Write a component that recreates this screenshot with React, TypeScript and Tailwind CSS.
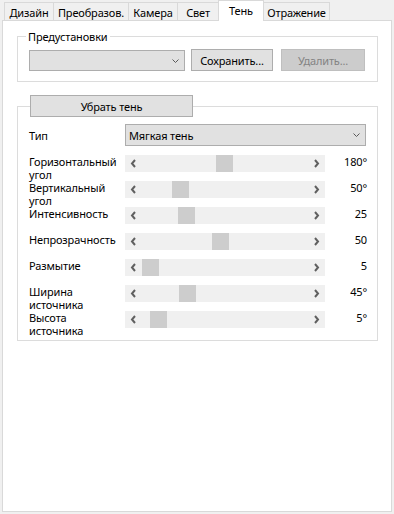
import React from "react";

const tabs = [
    { label: "Дизайн", w: "w-[50px]" },
    { label: "Преобразов.", w: "w-[76px]" },
    { label: "Камера", w: "w-[50px]" },
    { label: "Свет", w: "w-[42px]" },
    { label: "Тень", w: "w-[46px]", active: true },
    { label: "Отражение", w: "w-[67px]" },
];

const sliders = [
    { label: ["Горизонтальный", "угол"], pos: 74, value: "180°" },
    { label: ["Вертикальный", "угол"], pos: 30, value: "50°" },
    { label: ["Интенсивность"], pos: 36, value: "25" },
    { label: ["Непрозрачность"], pos: 70, value: "50" },
    { label: ["Размытие"], pos: 0, value: "5" },
    { label: ["Ширина", "источника"], pos: 37, value: "45°" },
    { label: ["Высота", "источника"], pos: 8, value: "5°" },
];

function ComboArrow() {
    return (
        <svg width="7" height="4" viewBox="0 0 7 4" className="shrink-0">
            <polyline points="0.5,0.5 3.5,3.5 6.5,0.5" fill="none" stroke="#5a5a5a" strokeWidth="1" />
        </svg>
    );
}

function ScrollArrow({ dir }: { dir: "left" | "right" }) {
    return (
        <div className="w-[17px] h-[17px] shrink-0">
            <svg width="17" height="17" viewBox="0 0 17 17">
                {dir === "left" ? (
                    <polyline points="10,5 7,8.5 10,12" fill="none" stroke="#606060" strokeWidth="2" />
                ) : (
                    <polyline points="7,5 10,8.5 7,12" fill="none" stroke="#606060" strokeWidth="2" />
                )}
            </svg>
        </div>
    );
}

function ScrollBar({ pos }: { pos: number }) {
    return (
        <div className="w-[200px] h-[17px] bg-[#f0f0f0] flex shrink-0">
            <ScrollArrow dir="left" />
            <div className="flex-1 flex">
                <div className="w-[17px] h-[17px] bg-[#cdcdcd]" style={{ marginLeft: pos }} />
            </div>
            <ScrollArrow dir="right" />
        </div>
    );
}

export default function App() {
    return (
        <div
            className="w-[394px] h-[514px] bg-[#f0f0f0] text-[11px] tracking-[-0.15px] text-black overflow-hidden"
            style={{ fontFamily: '"Noto Sans", "Open Sans", sans-serif' }}
        >
            {/* Tabs */}
            <div className="flex items-end h-[20px] pl-[4px]">
                {tabs.map((t, i) =>
                    t.active ? (
                        <div
                            key={t.label}
                            className={`${t.w} ${i > 0 ? "-ml-px" : ""} h-[21px] -mb-px relative z-10 bg-white border border-b-0 border-[#d9d9d9] pt-[2px] leading-[15px] text-center`}
                        >
                            {t.label}
                        </div>
                    ) : (
                        <div
                            key={t.label}
                            className={`${t.w} ${i > 0 ? "-ml-px" : ""} h-[18px] bg-[#f0f0f0] border border-b-0 border-[#d9d9d9] pt-[2px] leading-[15px] text-center whitespace-nowrap`}
                        >
                            {t.label}
                        </div>
                    )
                )}
            </div>

            {/* Tab panel */}
            <div className="ml-[2px] w-[390px] h-[492px] bg-white border border-[#d9d9d9]">
                {/* Presets */}
                <fieldset className="ml-[14px] mt-[8px] w-[361px] border border-[#dcdcdc]">
                    <legend className="ml-[8px] px-[2px] leading-[15px]">Предустановки</legend>
                    <div className="flex items-end h-[27px] pl-[11px]">
                        <div className="w-[156px] h-[21px] bg-[#e1e1e1] border border-[#adadad] flex items-center justify-end pr-[5px]">
                            <ComboArrow />
                        </div>
                        <button className="ml-[6px] w-[82px] h-[22px] bg-[#e1e1e1] border border-[#adadad] leading-[15px]">
                            Сохранить...
                        </button>
                        <button
                            disabled
                            className="ml-[8px] w-[84px] h-[22px] bg-[#cccccc] border border-[#bfbfbf] text-[#838383] leading-[15px]"
                        >
                            Удалить...
                        </button>
                    </div>
                    <div className="h-[10px]" />
                </fieldset>

                {/* Shadow settings */}
                <fieldset className="ml-[14px] mt-[13px] w-[361px] border border-[#dcdcdc]">
                    <legend className="ml-[12px]">
                        <button className="w-[163px] h-[22px] bg-[#e1e1e1] border border-[#adadad] leading-[15px] block">
                            Убрать тень
                        </button>
                    </legend>
                    <div className="pt-[7px] pl-[11px] pb-[12px] flex flex-col gap-[9px]">
                        <div className="flex items-center h-[22px]">
                            <div className="w-[96px] leading-[13px]">Тип</div>
                            <div className="w-[241px] h-[22px] bg-[#e1e1e1] border border-[#adadad] flex items-center justify-between pl-[3px] pr-[5px] leading-[15px]">
                                <span>Мягкая тень</span>
                                <ComboArrow />
                            </div>
                        </div>
                        {sliders.map((s) => (
                            <div key={s.label.join(" ")} className="flex items-start h-[17px]">
                                <div className="w-[96px] leading-[13px] whitespace-nowrap">
                                    {s.label.map((l) => (
                                        <div key={l}>{l}</div>
                                    ))}
                                </div>
                                <ScrollBar pos={s.pos} />
                                <div className="w-[42px] text-right leading-[13px]">{s.value}</div>
                            </div>
                        ))}
                    </div>
                </fieldset>
            </div>
        </div>
    );
}
